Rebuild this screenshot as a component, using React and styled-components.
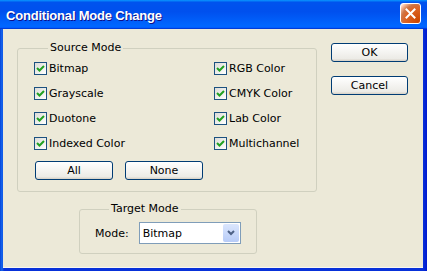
import React from 'react';
import styled, { createGlobalStyle } from 'styled-components';

const GlobalStyle = createGlobalStyle`
  html, body {
    margin: 0;
    padding: 0;
    background: #ece9d8;
  }
  * {
    box-sizing: border-box;
  }
`;

const sourceModes = [
  'Bitmap',
  'RGB Color',
  'Grayscale',
  'CMYK Color',
  'Duotone',
  'Lab Color',
  'Indexed Color',
  'Multichannel',
];

const App = () => (
  <>
    <GlobalStyle />
    <Window>
      <TitleBar>
        <Title>Conditional Mode Change</Title>
        <CloseButton aria-label="Close">
          <svg width="11" height="11" viewBox="0 0 11 11">
            <path d="M1.5 1.5 L9.5 9.5 M9.5 1.5 L1.5 9.5" stroke="#fff" strokeWidth="2" strokeLinecap="square" />
          </svg>
        </CloseButton>
      </TitleBar>

      <Client>
        <MainColumn>
          <SourceGroup>
            <Legend>Source Mode</Legend>
            <CheckGrid>
              {sourceModes.map((mode) => (
                <CheckRow key={mode}>
                  <CheckBox>
                    <svg width="9" height="9" viewBox="0 0 9 9">
                      <path d="M1 4 L3.5 6.5 L8 2" fill="none" stroke="#21a121" strokeWidth="2" />
                    </svg>
                  </CheckBox>
                  {mode}
                </CheckRow>
              ))}
            </CheckGrid>
            <ButtonRow>
              <Button $w={78}>All</Button>
              <Button $w={78}>None</Button>
            </ButtonRow>
          </SourceGroup>

          <TargetGroup>
            <Legend>Target Mode</Legend>
            <ModeRow>
              <span>Mode:</span>
              <Select>
                <span>Bitmap</span>
                <DropArrow>
                  <svg width="8" height="6" viewBox="0 0 8 6">
                    <path d="M1 1 L4 4 L7 1" fill="none" stroke="#4d6185" strokeWidth="2" />
                  </svg>
                </DropArrow>
              </Select>
            </ModeRow>
          </TargetGroup>
        </MainColumn>

        <SideColumn>
          <Button $w={77}>OK</Button>
          <Button $w={77}>Cancel</Button>
        </SideColumn>
      </Client>
    </Window>
  </>
);

export default App;

const Window = styled.div`
  width: 427px;
  height: 271px;
  display: flex;
  flex-direction: column;
  background: linear-gradient(90deg, #0842d8 0, #166aee 2px, #0831d9 4px, #0831d9 calc(100% - 4px), #0019cf 100%);
  font-family: 'DejaVu Sans', Tahoma, sans-serif;
  font-size: 11px;
  color: #000;
`;

const TitleBar = styled.div`
  height: 29px;
  flex: none;
  display: flex;
  align-items: center;
  justify-content: space-between;
  padding: 0 6px 0 6px;
  background: linear-gradient(
    180deg,
    #0997ff,
    #0053ee 8%,
    #0050ee 40%,
    #06f 88%,
    #06f 93%,
    #005bff 95%,
    #003dd7 96%,
    #003dd7
  );
`;

const Title = styled.div`
  color: #fff;
  font-family: 'Liberation Sans', Arial, sans-serif;
  font-weight: bold;
  font-size: 13px;
  letter-spacing: -0.2px;
  text-shadow: 1px 1px #0f1089;
  padding-top: 1px;
`;

const CloseButton = styled.div`
  width: 21px;
  height: 21px;
  margin-top: -3px;
  border: 1px solid #fff;
  border-radius: 3px;
  display: flex;
  align-items: center;
  justify-content: center;
  background: radial-gradient(circle at 90% 90%, #cc4600 0%, #dc6527 55%, #cd7546 70%, #ffccb2 90%, #fff 100%);
`;

const Client = styled.div`
  flex: 1;
  margin: 0 4px 3px 3px;
  background: #ece9d8;
  border-bottom: 1px solid #f7f6f1;
  display: flex;
  gap: 14px;
  padding: 12px 0 0 14px;
`;

const MainColumn = styled.div`
  width: 300px;
  display: flex;
  flex-direction: column;
`;

const GroupBox = styled.fieldset`
  margin: 0;
  border: 1px solid #d0d0bf;
  border-radius: 3px;
  min-width: 0;
`;

const Legend = styled.legend`
  margin-left: 14px;
  padding: 0 2px;
  line-height: 14px;
  font-size: 11px;
`;

const SourceGroup = styled(GroupBox)`
  padding: 5px 10px 11px 16px;
`;

const CheckGrid = styled.div`
  display: grid;
  grid-template-columns: 180px 1fr;
  row-gap: 8px;
`;

const CheckRow = styled.label`
  height: 17px;
  display: flex;
  align-items: center;
  gap: 2px;
  white-space: nowrap;
`;

const CheckBox = styled.span`
  width: 13px;
  height: 13px;
  flex: none;
  border: 1px solid #1c5180;
  background: linear-gradient(135deg, #dcdcd7, #fff);
  display: flex;
  align-items: center;
  justify-content: center;
`;

const ButtonRow = styled.div`
  display: flex;
  gap: 12px;
  margin: 9px 0 0 1px;
`;

const Button = styled.button`
  width: ${(p) => p.$w}px;
  height: 19px;
  padding: 0;
  border: 1px solid #003c74;
  border-radius: 3px;
  background: linear-gradient(180deg, #fff, #ecebe6 86%, #d6d0c5);
  font-family: 'DejaVu Sans', Tahoma, sans-serif;
  font-size: 11px;
  color: #000;
  line-height: 17px;
`;

const TargetGroup = styled(GroupBox)`
  margin: 10px 0 0 62px;
  width: 178px;
  padding: 6px 0 9px 15px;
`;

const ModeRow = styled.div`
  display: flex;
  align-items: center;
  gap: 10px;
`;

const Select = styled.div`
  width: 102px;
  height: 22px;
  border: 1px solid #7f9db9;
  background: #fff;
  display: flex;
  align-items: center;
  justify-content: space-between;
  padding: 1px 1px 1px 3px;
`;

const DropArrow = styled.span`
  width: 16px;
  height: 100%;
  border-radius: 2px;
  background: linear-gradient(180deg, #dbe6fd, #b7cbf7);
  display: flex;
  align-items: center;
  justify-content: center;
`;

const SideColumn = styled.div`
  display: flex;
  flex-direction: column;
  gap: 14px;
  margin-top: 2px;
`;
